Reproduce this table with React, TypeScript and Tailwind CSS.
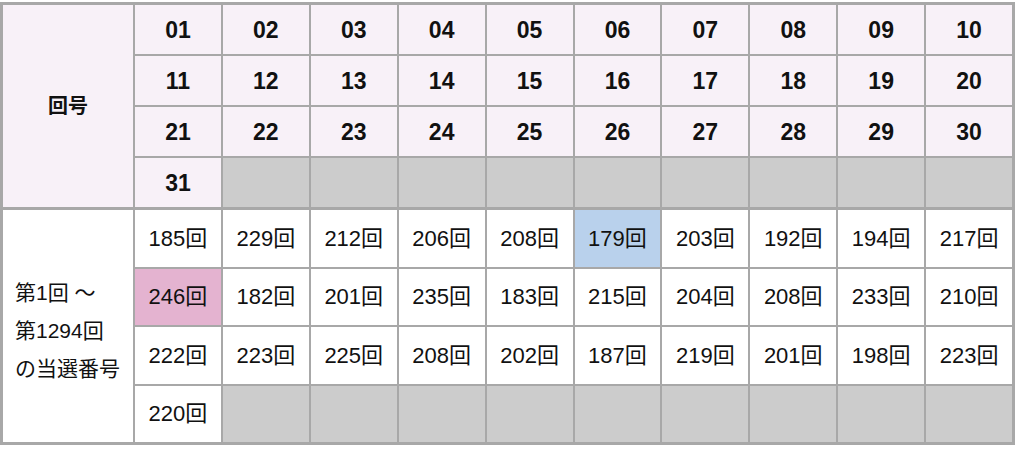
const draws = [
  ['185', '229', '212', '206', '208', '179', '203', '192', '194', '217'],
  ['246', '182', '201', '235', '183', '215', '204', '208', '233', '210'],
  ['222', '223', '225', '208', '202', '187', '219', '201', '198', '223'],
  ['220'],
]

const font = { fontFamily: '"Liberation Sans", "Noto Sans CJK JP", sans-serif' }

function cellBg(row: number, col: number) {
  if (row === 1 && col === 0) return 'bg-[#e4b3d0]'
  if (row === 0 && col === 5) return 'bg-[#b9d1ec]'
  return 'bg-white'
}

export default function App() {
  const numbers = Array.from({ length: 31 }, (_, i) => String(i + 1).padStart(2, '0'))

  return (
    <div className="w-[1024px] h-[456px] bg-white pt-[2px] text-[#111]" style={font}>
      <div className="w-[1015px] bg-[#a8a8a8] p-[3px] flex flex-col gap-[3px]">
        {/* 回号 */}
        <div className="grid grid-cols-[130px_repeat(10,1fr)] grid-rows-[repeat(4,49px)] gap-[2px]">
          <div className="row-span-4 bg-[#f8f1f8] flex items-center justify-center text-[20px] font-bold">
            回号
          </div>
          {Array.from({ length: 40 }, (_, i) => {
            const n = numbers[i]
            return n ? (
              <div key={i} className="bg-[#f8f1f8] flex items-center justify-center text-[23px] font-bold pt-[1px]">
                {n}
              </div>
            ) : (
              <div key={i} className="bg-[#cccccc]" />
            )
          })}
        </div>

        {/* 当選回数 */}
        <div className="grid grid-cols-[130px_repeat(10,1fr)] grid-rows-[repeat(4,56.5px)] gap-[2px]">
          <div className="row-span-4 bg-white flex flex-col justify-center pl-[12px] text-[21px] leading-[38px] pt-[9px]">
            <span>第1回 ～</span>
            <span>第1294回</span>
            <span>の当選番号</span>
          </div>
          {draws.map((row, r) =>
            Array.from({ length: 10 }, (_, c) =>
              row[c] ? (
                <div
                  key={`${r}-${c}`}
                  className={`${cellBg(r, c)} flex items-center justify-center text-[22px]`}
                >
                  {row[c]}回
                </div>
              ) : (
                <div key={`${r}-${c}`} className="bg-[#cccccc]" />
              ),
            ),
          )}
        </div>
      </div>
    </div>
  )
}
